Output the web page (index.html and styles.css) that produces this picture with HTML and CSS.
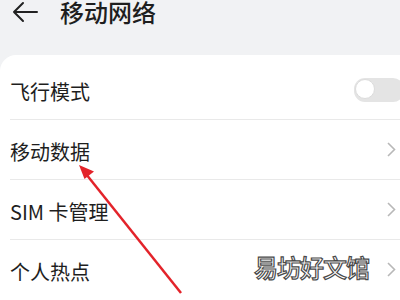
FILE: index.html
```html
<!DOCTYPE html>
<html lang="zh-CN">

<head>
    <meta charset="UTF-8">
    <meta name="viewport" content="width=device-width, initial-scale=1.0">
    <title>移动网络</title>
    <link rel="stylesheet" href="styles.css">
</head>

<body>

    <div class="header">
        <svg class="back" width="26" height="22" viewBox="0 0 26 22">
            <path d="M25 11H2M11 2L2 11l9 9" fill="none" stroke="#222" stroke-width="2" stroke-linecap="round" stroke-linejoin="round"/>
        </svg>
        <h1 class="title">移动网络</h1>
    </div>

    <div class="card">
        <div class="row">
            <span class="label">飞行模式</span>
            <div class="switch"><div class="knob"></div></div>
        </div>
        <div class="row">
            <span class="label">移动数据</span>
            <svg class="chevron" width="9" height="15" viewBox="0 0 9 15"><path d="M1 1l6.5 6.5L1 14" fill="none" stroke="#b8b8b8" stroke-width="1.6"/></svg>
        </div>
        <div class="row">
            <span class="label">SIM 卡管理</span>
            <svg class="chevron" width="9" height="15" viewBox="0 0 9 15"><path d="M1 1l6.5 6.5L1 14" fill="none" stroke="#b8b8b8" stroke-width="1.6"/></svg>
        </div>
        <div class="row last">
            <span class="label">个人热点</span>
            <svg class="chevron" width="9" height="15" viewBox="0 0 9 15"><path d="M1 1l6.5 6.5L1 14" fill="none" stroke="#b8b8b8" stroke-width="1.6"/></svg>
        </div>
    </div>

    <!-- annotation overlays -->
    <svg class="pointer" width="400" height="300" viewBox="0 0 400 300">
        <line x1="181" y1="293" x2="86" y2="174" stroke="#e3232a" stroke-width="2.5"/>
        <path d="M79 165l15 6.5-9.5 7.5z" fill="#e3232a"/>
    </svg>
    <div class="watermark">易坊好文馆</div>

</body>

</html>
```

FILE: styles.css
```css
body {
    margin: 0;
    width: 400px;
    height: 300px;
    overflow: hidden;
    position: relative;
    background: #f1f2f4;
    font-family: "Noto Sans CJK SC", "Noto Sans", sans-serif;
    color: #1e1e1e;
}

.header {
    display: flex;
    align-items: center;
    height: 24px;
    padding: 0 0 31px 12px;
}

.back {
    display: block;
}

.title {
    margin: 0 0 0 22px;
    font-size: 24px;
    line-height: 24px;
    font-weight: 500;
}

.card {
    background: #fff;
    border-top-left-radius: 16px;
    padding-top: 5px;
    height: 240px;
}

.row {
    display: flex;
    align-items: center;
    justify-content: space-between;
    height: 59px;
    margin-left: 10px;
    padding-right: 4px;
    border-bottom: 1px solid #e9e9e9;
}

.row.last {
    border-bottom: none;
}

.label {
    font-size: 20px;
    line-height: 24px;
    padding-top: 4px;
}

.switch {
    width: 48px;
    height: 22px;
    border-radius: 11px;
    background: #e4e4e4;
    margin-right: -8px;
    padding: 1px;
}

.knob {
    width: 20px;
    height: 20px;
    border-radius: 50%;
    background: #fff;
    box-sizing: border-box;
    border: 1px solid #dcdcdc;
}

.pointer {
    position: absolute;
    left: 0;
    top: 0;
}

.watermark {
    position: absolute;
    left: 254px;
    top: 252px;
    font-size: 24px;
    line-height: 30px;
    font-weight: 500;
    color: #fff;
    -webkit-text-stroke: 1.2px #4a4a4a;
    letter-spacing: -1px;
}
```
